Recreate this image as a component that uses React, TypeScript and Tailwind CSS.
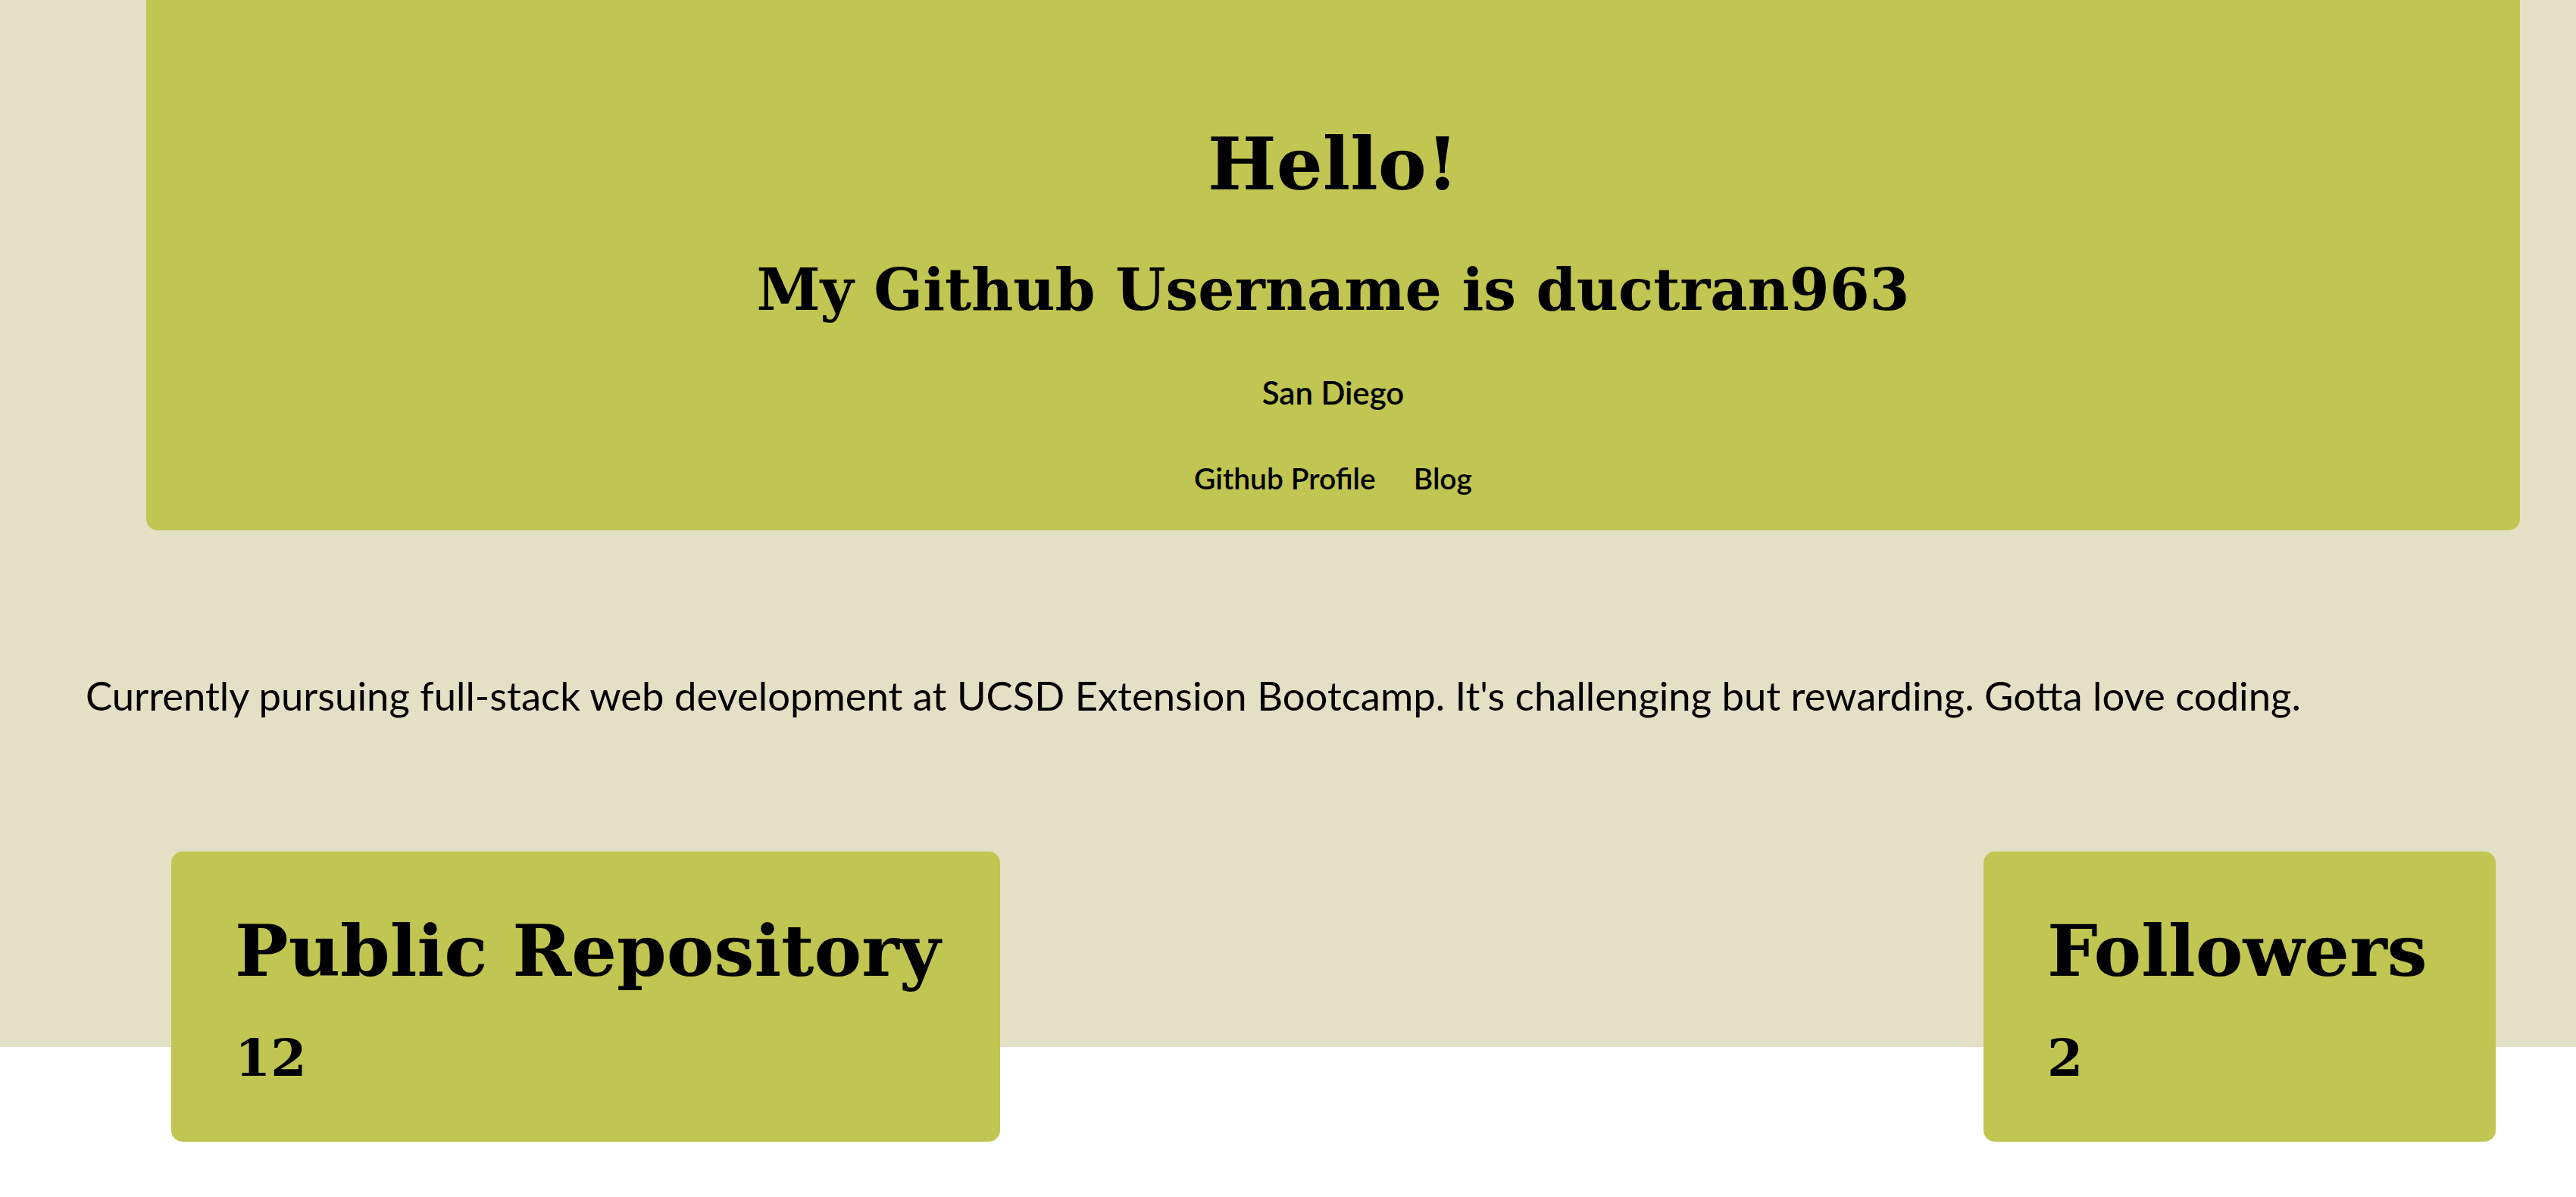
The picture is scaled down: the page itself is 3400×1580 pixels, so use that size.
import React from 'react';

const slab = "font-['DejaVu_Serif',serif] font-bold text-black";
const sans = "font-['Lato',sans-serif] text-black";

interface StatCardProps {
  title: string;
  value: number;
  width: string;
}

const StatCard: React.FC<StatCardProps> = ({ title, value, width }) => (
  <div className={`${width} h-[383px] shrink-0 rounded-[15px] bg-[#c1c551] pl-[84px] pt-[84px]`}>
    <h3 className={`${slab} text-[94px] leading-[94px] whitespace-nowrap`}>{title}</h3>
    <p className={`${slab} mt-[60px] text-[68px] leading-[68px]`}>{value}</p>
  </div>
);

export default function App() {
  return (
    <div className="min-h-screen bg-white">
      <div className="h-[1382px] bg-[#e4e0c6]">
        {/* Header */}
        <header className="ml-[193px] mr-[74px] flex h-[700px] flex-col items-center rounded-b-[15px] bg-[#c1c551] pt-[166px]">
          <h1 className={`${slab} text-[96px] leading-[102px]`}>Hello!</h1>
          <h2 className={`${slab} mt-[77px] text-[76px] leading-[76px]`}>
            My Github Username is ductran963
          </h2>
          <p className={`${sans} mt-[76px] text-[42px] leading-[42px] font-semibold`}>San Diego</p>
          <nav className="mt-[73px] flex items-center gap-[50px]">
            <a href="#" className={`${sans} text-[39px] leading-[39px] font-semibold`}>
              Github Profile
            </a>
            <a href="#" className={`${sans} text-[39px] leading-[39px] font-semibold`}>
              Blog
            </a>
          </nav>
        </header>

        {/* Bio */}
        <p className={`${sans} mt-[191px] pl-[113px] text-[52.6px] leading-[53px]`}>
          Currently pursuing full-stack web development at UCSD Extension Bootcamp. It's challenging but rewarding. Gotta love coding.
        </p>

        {/* Stats */}
        <div className="mt-[180px] flex justify-between pl-[226px] pr-[106px]">
          <StatCard title="Public Repository" value={12} width="w-[1094px]" />
          <StatCard title="Followers" value={2} width="w-[676px]" />
        </div>
      </div>
    </div>
  );
}
